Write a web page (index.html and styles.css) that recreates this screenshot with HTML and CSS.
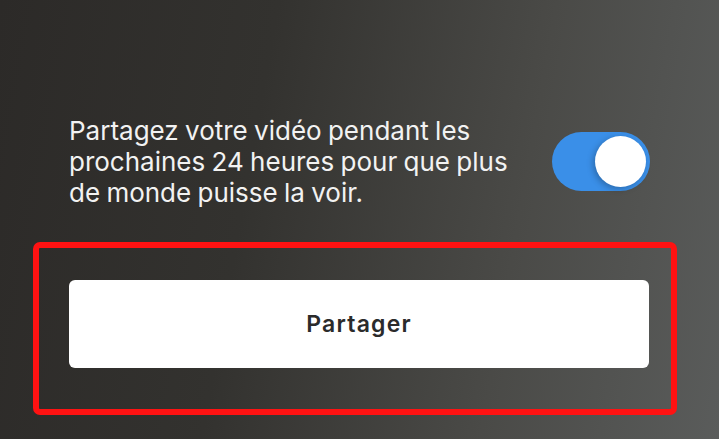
FILE: index.html
```html
<!DOCTYPE html>
<html lang="fr">
<head>
  <meta charset="UTF-8">
  <meta name="viewport" content="width=device-width, initial-scale=1.0">
  <title>Partager</title>
  <link rel="stylesheet" href="styles.css">
</head>
<body>
  <div class="screen">
    <div class="share-row">
      <p class="share-text">Partagez votre vidéo pendant les prochaines 24 heures pour que plus de monde puisse la voir.</p>
      <label class="toggle">
        <input type="checkbox" checked>
        <span class="knob"></span>
      </label>
    </div>
    <div class="highlight">
      <button class="btn-share">Partager</button>
    </div>
  </div>
</body>
</html>
```

FILE: styles.css
```css
html, body {
  margin: 0;
  padding: 0;
  height: 100%;
}

body {
  font-family: 'Inter', 'Roboto', sans-serif;
  background: linear-gradient(100deg, #2c2a28 0%, #33322f 35%, #4a4a47 70%, #5a5c5b 100%);
  overflow: hidden;
}

.screen {
  padding: 115px 0 0 0;
}

.share-row {
  display: flex;
  align-items: center;
  justify-content: space-between;
  padding: 0 69px 0 69px;
}

.share-text {
  margin: 0;
  width: 460px;
  font-size: 26px;
  line-height: 31px;
  word-spacing: -1px;
  color: #f2f2f2;
}

.toggle {
  position: relative;
  display: block;
  width: 98px;
  height: 59px;
  border-radius: 30px;
  background: #3a8fe8;
  flex-shrink: 0;
}

.toggle input {
  display: none;
}

.knob {
  position: absolute;
  top: 4px;
  right: 4px;
  width: 51px;
  height: 51px;
  border-radius: 50%;
  background: #ffffff;
  box-shadow: -2px 2px 6px rgba(0, 0, 0, 0.25);
}

.highlight {
  margin: 34px 42px 0 33px;
  border: 6px solid #ff1212;
  border-radius: 7px;
  padding: 32px 22px 41px 30px;
}

.btn-share {
  display: block;
  width: 100%;
  height: 88px;
  border: none;
  border-radius: 6px;
  background: #ffffff;
  font-family: 'Inter', 'Roboto', sans-serif;
  font-size: 23px;
  font-weight: 600;
  letter-spacing: 1.2px;
  color: #2b2b2b;
}
```
